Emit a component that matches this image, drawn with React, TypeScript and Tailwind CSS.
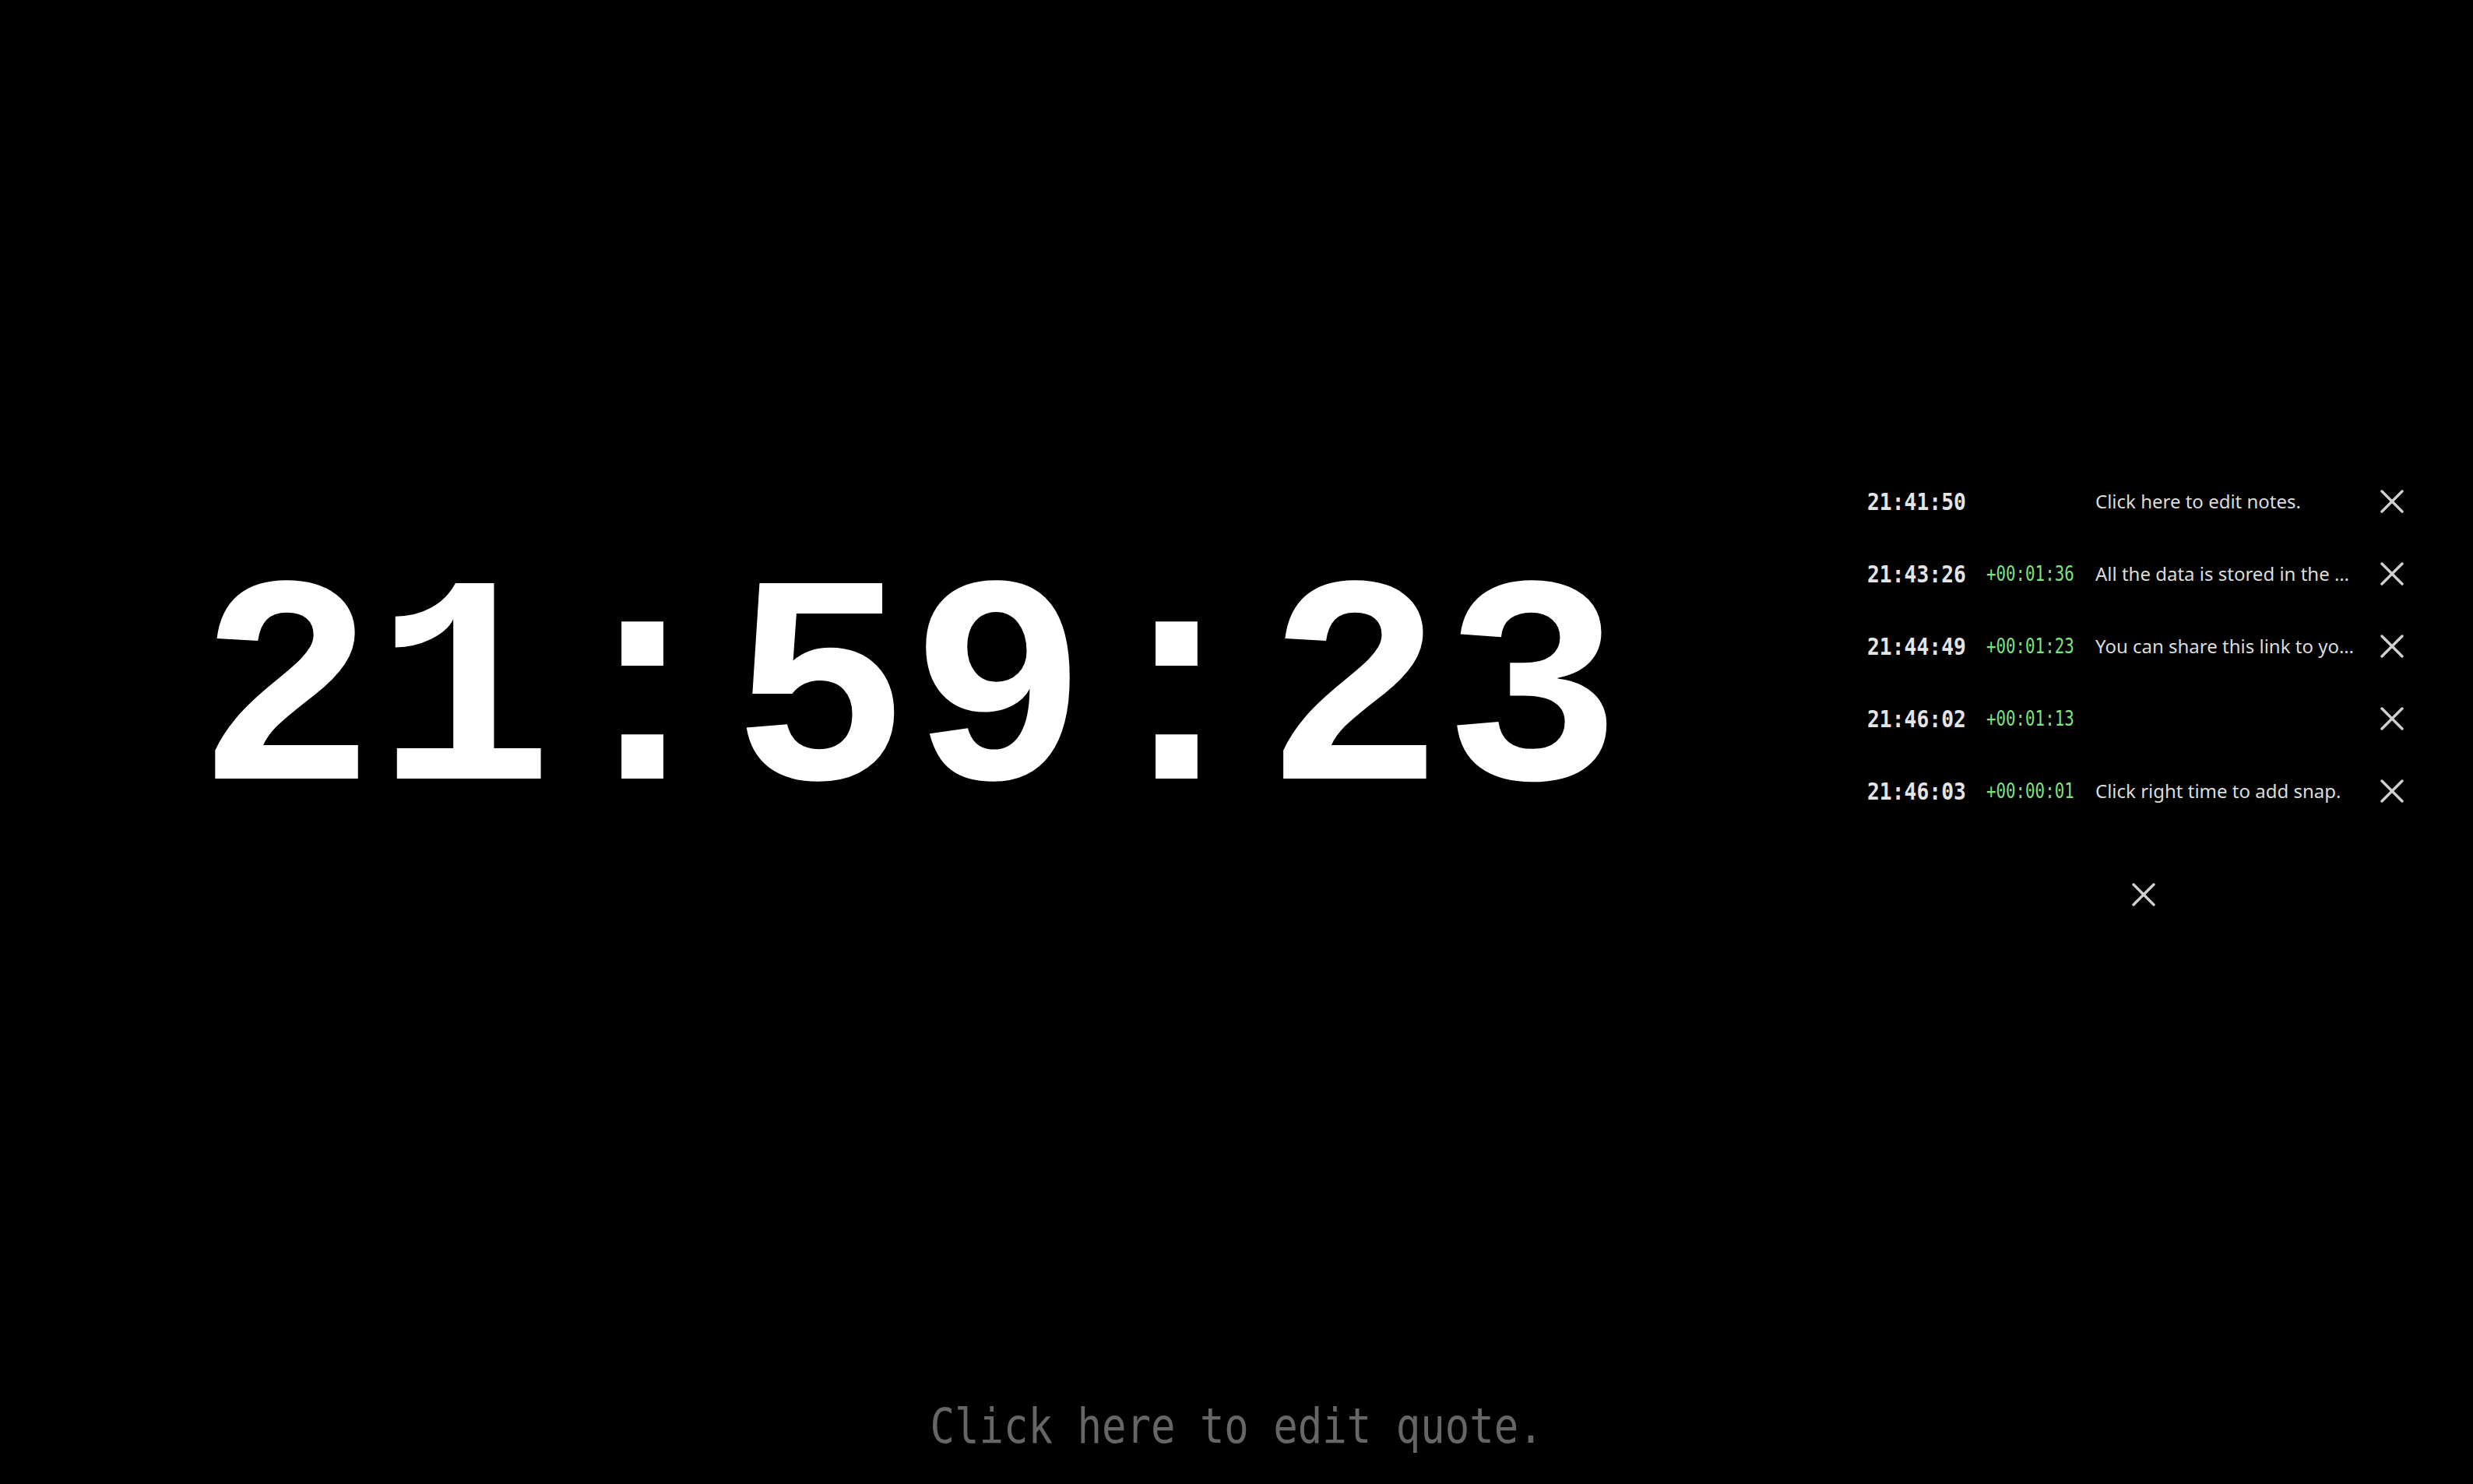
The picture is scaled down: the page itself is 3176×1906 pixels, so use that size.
import React from "react";

const notes = [
  { time: "21:41:50", delta: "", text: "Click here to edit notes." },
  { time: "21:43:26", delta: "+00:01:36", text: "All the data is stored in the browser, nothing is sent to a server." },
  { time: "21:44:49", delta: "+00:01:23", text: "You can share this link to your friends." },
  { time: "21:46:02", delta: "+00:01:13", text: "" },
  { time: "21:46:03", delta: "+00:00:01", text: "Click right time to add snap." },
];

function XIcon() {
  return (
    <svg width="30" height="30" viewBox="0 0 30 30" fill="none">
      <line x1="2" y1="2" x2="28" y2="28" stroke="#d0d0d0" strokeWidth="3.4" strokeLinecap="round" />
      <line x1="28" y1="2" x2="2" y2="28" stroke="#d0d0d0" strokeWidth="3.4" strokeLinecap="round" />
    </svg>
  );
}

export default function App() {
  return (
    <div className="w-[3176px] h-[1906px] bg-black flex flex-col overflow-hidden">
      <div className="flex-1 flex flex-row">
        <div className="flex-1 flex items-center justify-center">
          <div
            className="mt-[40px] mr-[12px] text-white font-bold leading-none text-[381px] whitespace-nowrap"
            style={{ fontFamily: '"Liberation Mono", monospace' }}
          >
            21:59:23
          </div>
        </div>
        <div className="w-[828px] flex flex-col justify-center pl-[50px]">
          <div className="mt-[37px] flex flex-col">
            {notes.map((n) => (
              <div key={n.time} className="h-[93px] grid grid-cols-[153px_140px_337px_88px] items-center">
                <div
                  className="text-[31px] font-bold text-[#e4e4e4] leading-none whitespace-nowrap origin-left scale-x-[0.85]"
                  style={{ fontFamily: '"DejaVu Sans Mono", monospace' }}
                >
                  {n.time}
                </div>
                <div
                  className="text-[26px] text-[#80e27e] leading-none whitespace-nowrap origin-left scale-x-[0.8]"
                  style={{ fontFamily: '"DejaVu Sans Mono", monospace' }}
                >
                  {n.delta}
                </div>
                <div
                  className="text-[24px] text-[#dcdcdc] leading-normal truncate"
                  style={{ fontFamily: '"Noto Sans", sans-serif' }}
                >
                  {n.text}
                </div>
                <div className="flex items-center justify-center">
                  <XIcon />
                </div>
              </div>
            ))}
            <div className="mt-[40px] h-[93px] w-[710px] flex items-center justify-center">
              <XIcon />
            </div>
          </div>
        </div>
      </div>
      <div className="h-[150px] flex justify-center pt-[44px]">
        <div
          className="text-[63px] leading-none text-[#666666] whitespace-nowrap scale-x-[0.83] h-[63px]"
          style={{ fontFamily: '"DejaVu Sans Mono", monospace' }}
        >
          Click here to edit quote.
        </div>
      </div>
    </div>
  );
}
